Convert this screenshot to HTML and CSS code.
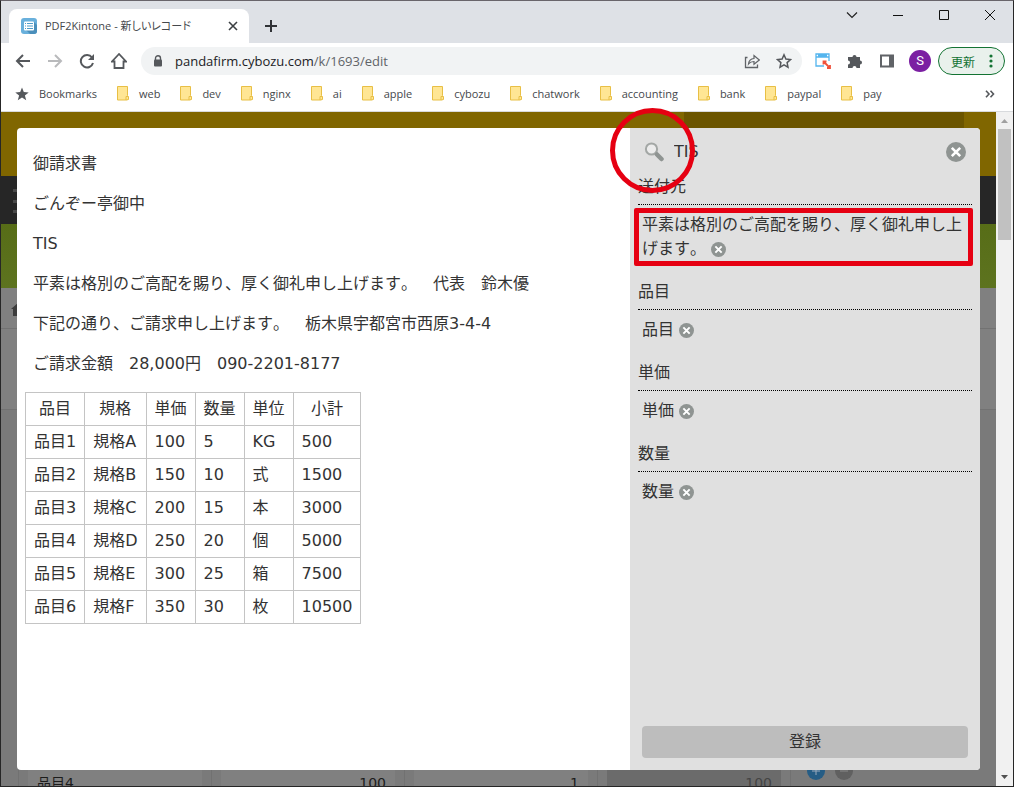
FILE: index.html
```html
<!DOCTYPE html>
<html lang="ja">
<head>
<meta charset="utf-8">
<title>PDF2Kintone - 新しいレコード</title>
<link rel="stylesheet" href="styles.css">
</head>
<body>
<svg class="defs" aria-hidden="true">
  <symbol id="remove" viewBox="0 0 20 20"><circle cx="10" cy="10" r="10" fill="#8f9492"/><path d="M5.800 5.800l8.400 8.400M14.200 5.800l-8.400 8.400" stroke="#fff" stroke-width="2.600"/></symbol>
  <symbol id="folder" viewBox="0 0 12 15"><path d="M.5 .5h10v9l1 1v3h-1v.5H.5z" fill="#ffe694" stroke="#e8bf45"/><path d="M9 14v-3.500h2" fill="none" stroke="#e8bf45"/></symbol>
</svg>
<div class="window">
  <header class="tabstrip">
    <div class="tab">
      <svg width="16" height="16" viewBox="0 0 16 16"><rect width="16" height="16" rx="3" fill="#69b0dc"/><path d="M5 12l8-8 3 3v6q0 3-3 3H9z" fill="#4a8fbb"/><rect x="3" y="3.500" width="10" height="9" rx="1" fill="#fff"/><path d="M4 5.500h1M6 5.500h6M4 8h1M6 8h6M4 10.500h1M6 10.500h6" stroke="#4f9cc9"/></svg>
      <span class="tab-title">PDF2Kintone - 新しいレコード</span>
      <button class="icon-btn" aria-label="タブを閉じる"><svg width="10" height="10" viewBox="0 0 10 10"><path d="M1 1l8 8M9 1L1 9" stroke="#3c4043" stroke-width="1.600"/></svg></button>
    </div>
    <button class="icon-btn new-tab" aria-label="新しいタブ"><svg width="12" height="12" viewBox="0 0 12 12"><path d="M6 0v12M0 6h12" stroke="#303236" stroke-width="2"/></svg></button>
    <div class="window-buttons">
      <button class="icon-btn" aria-label="タブを検索"><svg width="12" height="12" viewBox="0 0 12 12"><path d="M1 3.500l5 5 5-5" fill="none" stroke="#222" stroke-width="1.200"/></svg></button>
      <button class="icon-btn" aria-label="最小化"><svg width="12" height="12" viewBox="0 0 12 12"><path d="M1 6.500h10" stroke="#111"/></svg></button>
      <button class="icon-btn" aria-label="最大化"><svg width="12" height="12" viewBox="0 0 12 12"><path d="M1.500 1.500h9v9h-9z" fill="none" stroke="#111"/></svg></button>
      <button class="icon-btn" aria-label="閉じる"><svg width="12" height="12" viewBox="0 0 12 12"><path d="M1 1l10 10M11 1L1 11" stroke="#111"/></svg></button>
    </div>
  </header>
  <div class="toolbar">
    <nav class="nav-buttons">
      <button class="icon-btn" aria-label="戻る"><svg width="16" height="16" viewBox="0 0 16 16"><path d="M15 8H2M8 2L2 8l6 6" fill="none" stroke="#55585c" stroke-width="2"/></svg></button>
      <button class="icon-btn" aria-label="進む"><svg width="16" height="16" viewBox="0 0 16 16"><path d="M1 8h13M8 2l6 6-6 6" fill="none" stroke="#b9babc" stroke-width="2"/></svg></button>
      <button class="icon-btn" aria-label="再読み込み"><svg width="16" height="16" viewBox="0 0 16 16"><path d="M13 4.500A6.200 6.200 0 1 0 14 10" fill="none" stroke="#55585c" stroke-width="2"/><path d="M15 1v6H9z" fill="#55585c"/></svg></button>
      <button class="icon-btn" aria-label="ホーム"><svg width="16" height="16" viewBox="0 0 16 16"><path d="M8 1L1 8.500h2.500V15h9V8.500H15z" fill="none" stroke="#55585c" stroke-width="1.800"/></svg></button>
    </nav>
    <div class="address">
      <svg width="10" height="12" viewBox="0 0 10 12"><path d="M2.500 5V3.200a2.500 2.500 0 0 1 5 0V5" fill="none" stroke="#55585c" stroke-width="1.400"/><rect x="1" y="4.500" width="8" height="7" rx="1" fill="#55585c"/></svg>
      <span class="url">pandafirm.cybozu.com<span class="path">/k/1693/edit</span></span>
      <button class="icon-btn" aria-label="共有"><svg width="16" height="16" viewBox="0 0 16 16"><path d="M3.500 4.500h-2v10h12v-3" fill="none" stroke="#606367" stroke-width="1.300"/><path d="M4.500 11q.5-5 5.500-5.500V2.500L15.300 7 10 11.200V8.500Q6.500 8.500 4.500 11z" fill="none" stroke="#606367" stroke-width="1.200"/></svg></button>
      <button class="icon-btn" aria-label="ブックマーク"><svg width="16" height="16" viewBox="0 0 16 16"><path d="M8 1.800l1.900 4.200 4.600.5-3.400 3.100.9 4.600L8 11.900l-4 2.300.9-4.600L1.500 6.500 6.100 6z" fill="none" stroke="#55585c" stroke-width="1.500"/></svg></button>
    </div>
    <div class="extensions">
      <button class="icon-btn" aria-label="拡張"><svg width="16" height="16" viewBox="0 0 16 16"><path d="M9 13H1V1h13v7M1 4h13M3 2.500h9" fill="none" stroke="#54b5ee" stroke-width="1.300"/><path d="M9 9l5.500 5.500M8.500 11.500v-3h3M15 12v3h-3" fill="none" stroke="#f0523c" stroke-width="1.800"/></svg></button>
      <button class="icon-btn" aria-label="拡張機能"><svg width="16" height="16" viewBox="0 0 16 16"><path d="M1 4h4.500a2 2 0 1 1 4 0H13v3.500a2 2 0 1 1 0 4V15H9.500a2 2 0 0 0-4 0H1v-3.500a2 2 0 0 0 0-4z" fill="#55585c"/></svg></button>
      <button class="icon-btn" aria-label="サイドパネル"><svg width="16" height="16" viewBox="0 0 16 16"><path d="M2 2.500h12v11H2z" fill="#fff" stroke="#606367" stroke-width="2"/><path d="M10 2h4v12h-4z" fill="#606367"/></svg></button>
    </div>
    <button class="avatar">S</button>
    <button class="update">更新<svg width="4" height="14" viewBox="0 0 4 14"><circle cx="2" cy="2" r="1.600" fill="#137333"/><circle cx="2" cy="7" r="1.600" fill="#137333"/><circle cx="2" cy="12" r="1.600" fill="#137333"/></svg></button>
  </div>
  <nav class="bookmarks">
    <a href="#" class="starred"><svg width="14" height="14" viewBox="0 0 14 14"><path d="M7 .5l1.800 4.600 4.900.3-3.800 3.100 1.300 4.800L7 10.600l-4.200 2.700 1.300-4.800L.3 5.400l4.900-.3z" fill="#55585c"/></svg>Bookmarks</a>
    <a href="#"><svg width="12" height="15"><use href="#folder"/></svg>web</a>
    <a href="#"><svg width="12" height="15"><use href="#folder"/></svg>dev</a>
    <a href="#"><svg width="12" height="15"><use href="#folder"/></svg>nginx</a>
    <a href="#"><svg width="12" height="15"><use href="#folder"/></svg>ai</a>
    <a href="#"><svg width="12" height="15"><use href="#folder"/></svg>apple</a>
    <a href="#"><svg width="12" height="15"><use href="#folder"/></svg>cybozu</a>
    <a href="#"><svg width="12" height="15"><use href="#folder"/></svg>chatwork</a>
    <a href="#"><svg width="12" height="15"><use href="#folder"/></svg>accounting</a>
    <a href="#"><svg width="12" height="15"><use href="#folder"/></svg>bank</a>
    <a href="#"><svg width="12" height="15"><use href="#folder"/></svg>paypal</a>
    <a href="#"><svg width="12" height="15"><use href="#folder"/></svg>pay</a>
    <button class="icon-btn more" aria-label="その他のブックマーク"><svg width="10" height="8" viewBox="0 0 10 8"><path d="M1 .8L4 4 1 7.200M5.500 .8l3 3.200-3 3.200" fill="none" stroke="#55585c" stroke-width="1.600"/></svg></button>
  </nav>
  <div class="viewport">
    <div class="stage">
      <div class="app">
        <div class="app-header"><div class="app-search"></div></div>
        <div class="app-bar"><svg width="16" height="24" viewBox="0 0 16 24"><path d="M0 1.500h16M0 12.500h16M0 22.500h16" stroke="#484848" stroke-width="3"/></svg></div>
        <div class="app-hero"></div>
        <div class="crumbs"><svg width="16" height="14" viewBox="0 0 16 14"><path d="M8 0l8 7h-2v7h-4V9H6v5H2V7H0z" fill="#3c3c3c"/></svg></div>
        <div class="app-menu"></div>
        <div class="app-body">
          <div class="record-row">
            <div class="cell"><div class="field">品目4</div></div>
            <div class="cell"><div class="field number">100</div></div>
            <div class="cell"><div class="field number">1</div></div>
            <div class="cell"><div class="field number locked">100</div></div>
            <div class="row-actions">
              <svg width="18" height="18" viewBox="0 0 18 18"><circle cx="9" cy="9" r="9" fill="#265d85"/><path d="M9 5v8M5 9h8" stroke="#9ab"/></svg>
              <svg width="18" height="18" viewBox="0 0 18 18"><circle cx="9" cy="9" r="9" fill="#606060"/><path d="M5 9h8" stroke="#888"/></svg>
            </div>
          </div>
        </div>
      </div>
      <main class="dialog">
        <article class="document">
          <p>御請求書</p>
          <p>ごんぞー亭御中</p>
          <p>TIS</p>
          <p>平素は格別のご高配を賜り、厚く御礼申し上げます。　代表　鈴木優</p>
          <p>下記の通り、ご請求申し上げます。　栃木県宇都宮市西原3-4-4</p>
          <p>ご請求金額　28,000円　090-2201-8177</p>
          <table>
            <thead><tr><th>品目</th><th>規格</th><th>単価</th><th>数量</th><th>単位</th><th>小計</th></tr></thead>
            <tbody>
              <tr><td>品目1</td><td>規格A</td><td>100</td><td>5</td><td>KG</td><td>500</td></tr>
              <tr><td>品目2</td><td>規格B</td><td>150</td><td>10</td><td>式</td><td>1500</td></tr>
              <tr><td>品目3</td><td>規格C</td><td>200</td><td>15</td><td>本</td><td>3000</td></tr>
              <tr><td>品目4</td><td>規格D</td><td>250</td><td>20</td><td>個</td><td>5000</td></tr>
              <tr><td>品目5</td><td>規格E</td><td>300</td><td>25</td><td>箱</td><td>7500</td></tr>
              <tr><td>品目6</td><td>規格F</td><td>350</td><td>30</td><td>枚</td><td>10500</td></tr>
            </tbody>
          </table>
        </article>
        <aside class="panel">
          <div class="search">
            <button class="icon-btn search-btn" aria-label="検索"><svg width="20" height="20" viewBox="0 0 20 20"><circle cx="7.500" cy="7" r="5.600" fill="#ececec" stroke="#a3a7a5" stroke-width="2"/><path d="M13 12.500l4.500 4.500" stroke="#8f9492" stroke-width="4.500" stroke-linecap="round"/></svg><span class="circle-mark"></span></button>
            <input type="text" value="TIS" aria-label="検索語">
            <button class="icon-btn" aria-label="閉じる"><svg width="20" height="20"><use href="#remove"/></svg></button>
          </div>
          <section><h2>送付元</h2><div class="value">平素は格別のご高配を賜り、厚く御礼申し上げます。<button class="icon-btn remove" aria-label="削除"><svg width="15" height="15"><use href="#remove"/></svg></button><span class="box-mark"></span></div></section>
          <section><h2>品目</h2><div class="value">品目<button class="icon-btn remove" aria-label="削除"><svg width="15" height="15"><use href="#remove"/></svg></button></div></section>
          <section><h2>単価</h2><div class="value">単価<button class="icon-btn remove" aria-label="削除"><svg width="15" height="15"><use href="#remove"/></svg></button></div></section>
          <section><h2>数量</h2><div class="value">数量<button class="icon-btn remove" aria-label="削除"><svg width="15" height="15"><use href="#remove"/></svg></button></div></section>
          <button class="submit">登録</button>
        </aside>
      </main>
    </div>
    <div class="scrollbar">
      <svg width="17" height="17" viewBox="0 0 17 17"><path d="M5 11l3.500-4L12 11z" fill="#a0a0a0"/></svg>
      <div class="track"><div class="thumb"></div></div>
      <svg width="17" height="17" viewBox="0 0 17 17"><path d="M5 6l3.500 4L12 6z" fill="#505050"/></svg>
    </div>
  </div>
</div>
</body>
</html>
```
FILE: styles.css
```css
* {
  box-sizing: border-box;
}

body {
  margin: 0;
  color: #333;
  font: 16px/24px "DejaVu Sans", "Noto Sans CJK JP", sans-serif;
  font-kerning: none;
  text-spacing-trim: space-all;
}

.defs {
  display: none;
}

svg {
  display: block;
  flex: none;
}

.icon-btn {
  display: flex;
  padding: 0;
  border: 0;
  background: none;
}

.window {
  display: flex;
  flex-direction: column;
  height: 100vh;
  border: 1px solid #262626;
  border-top-color: #69656b;
  background: #fff;
  overflow: hidden;
}

.tabstrip,
.toolbar,
.bookmarks {
  display: flex;
  align-items: center;
  flex: none;
  font-family: "Open Sans", "Noto Sans CJK JP", sans-serif;
  font-size: 11px;
}

/* Tab strip */
.tabstrip {
  height: 42px;
  padding-left: 8px;
  background: #dee1e6;
}

.tab {
  display: flex;
  align-items: center;
  align-self: flex-end;
  gap: 8px;
  width: 240px;
  height: 34px;
  padding: 0 11px 0 12px;
  border-radius: 8px 8px 0 0;
  background: #fff;
}

.tab-title {
  flex: 1;
  color: #45484c;
  white-space: nowrap;
  font-feature-settings: "palt";
}

.new-tab {
  margin: 8px 0 0 16px;
}

.window-buttons {
  display: flex;
  align-self: flex-start;
  gap: 34px;
  margin-left: auto;
  padding: 8px 17px 0 0;
}

/* Toolbar */
.toolbar {
  height: 36px;
  padding: 0 8px 0 14px;
}

.nav-buttons {
  display: flex;
  gap: 16px;
}

.address {
  display: flex;
  align-items: center;
  flex: 1;
  gap: 16px;
  height: 28px;
  margin-left: 14px;
  padding: 0 10px 0 12px;
  border-radius: 14px;
  background: #f1f3f4;
}

.url {
  flex: 1;
  margin-left: -4px;
  color: #202124;
  font-size: 13px;
}

.path {
  color: #5f6368;
}

.extensions {
  display: flex;
  gap: 16px;
  margin: 0 14px 0 13px;
}

.avatar {
  width: 22px;
  height: 22px;
  padding: 0;
  border: 0;
  border-radius: 50%;
  background: #7b1fa2;
  color: #fff;
  font: 13px/22px Roboto, sans-serif;
}

.update {
  display: flex;
  align-items: center;
  gap: 14px;
  height: 28px;
  margin-left: 7px;
  padding: 0 11px 0 12px;
  border: 1px solid #137333;
  border-radius: 14px;
  background: #e9f1ec;
  color: #137333;
  font: 12px "Noto Sans CJK JP", sans-serif;
}

/* Bookmarks bar */
.bookmarks {
  gap: 20px;
  height: 33px;
  padding: 0 18px 3px 14px;
  border-bottom: 1px solid #d8dadd;
}

.bookmarks a {
  display: flex;
  align-items: center;
  gap: 10px;
  color: #45484c;
  text-decoration: none;
}

.more {
  margin-left: auto;
}

/* Page area */
.viewport {
  display: flex;
  flex: 1;
  min-height: 0;
}

.stage {
  position: relative;
  flex: 1;
}

.app {
  display: flex;
  flex-direction: column;
  height: 100%;
}

.app > * {
  flex: none;
}

.app-header {
  display: flex;
  justify-content: flex-end;
  height: 64px;
  padding-right: 32px;
  background: #806600;
}

.app-search {
  width: 280px;
  background: #6b5500;
}

.app-bar {
  height: 48px;
  padding: 13px 12px;
  background: #262626;
}

.app-hero {
  height: 64px;
  background: linear-gradient(#576d17, #5d731f);
}

.crumbs {
  height: 41px;
  padding: 14px 10px;
  border-bottom: 1px solid #727272;
  background: #808080;
}

.app-menu {
  height: 81px;
  border-bottom: 1px solid #727272;
  background: #808080;
}

.app > .app-body {
  display: flex;
  flex: 1;
  align-items: flex-end;
  background: #7a7a7a;
}

.record-row {
  display: flex;
  height: 24px;
  margin-left: 17px;
}

.cell {
  width: 193px;
  padding: 0 9px;
  border-left: 1px solid #717171;
  overflow: hidden;
}

.field {
  width: 174px;
  height: 24px;
  padding: 9px 9px 0;
  background: #808080;
  color: #1c1c1c;
  font-size: 14px;
}

.number {
  text-align: right;
}

.locked {
  background: #6b6b6b;
  color: #444;
}

.row-actions {
  display: flex;
  gap: 10px;
  padding-left: 16px;
  border-left: 1px solid #717171;
}

.scrollbar {
  display: flex;
  flex-direction: column;
  background: #f1f1f1;
}

.track {
  flex: 1;
  padding: 0 2px;
}

.thumb {
  height: 111px;
  background: #c1c1c1;
}

/* Dialog */
.dialog {
  position: absolute;
  inset: 16px;
  display: flex;
  border-radius: 4px;
  background: #fff;
}

.document {
  flex: 1;
  padding: 24px 8px;
}

.document p {
  margin: 0 8px 16px;
}

.document table {
  border-collapse: collapse;
}

.document th,
.document td {
  padding: 4px 8px;
  border: 1px solid #c4c4c4;
  font-weight: 400;
  text-align: left;
}

.document th {
  text-align: center;
}

.panel {
  display: flex;
  flex-direction: column;
  width: 350px;
  padding: 0 8px 12px;
  border-radius: 0 4px 4px 0;
  background: #e0e0e0;
}

.search {
  display: flex;
  align-items: center;
  gap: 10px;
  height: 47px;
  padding: 0 6px;
}

.search input {
  flex: 1;
  min-width: 0;
  padding: 0;
  border: 0;
  background: none;
  color: inherit;
  font: inherit;
}

.search-btn {
  position: relative;
}

.circle-mark {
  position: absolute;
  inset: -34px -31px -31px -34px;
  z-index: 1;
  border: 5px solid #e60012;
  border-radius: 50%;
}

.panel h2 {
  margin: 0;
  padding-bottom: 5px;
  border-bottom: 1px dotted #000;
  font-size: 16px;
  font-weight: 400;
}

.value {
  position: relative;
  padding: 8px 4px 19px;
}

.box-mark {
  position: absolute;
  inset: 3px -1px 14px -4px;
  border: 5px solid #e60012;
  border-radius: 2px;
}

.remove {
  display: inline-flex;
  margin-left: 5px;
  vertical-align: -3px;
}

.submit {
  height: 32px;
  margin: auto 4px 0;
  border: 0;
  border-radius: 4px;
  background: #bdbdbd;
  color: inherit;
  font: inherit;
}
```
